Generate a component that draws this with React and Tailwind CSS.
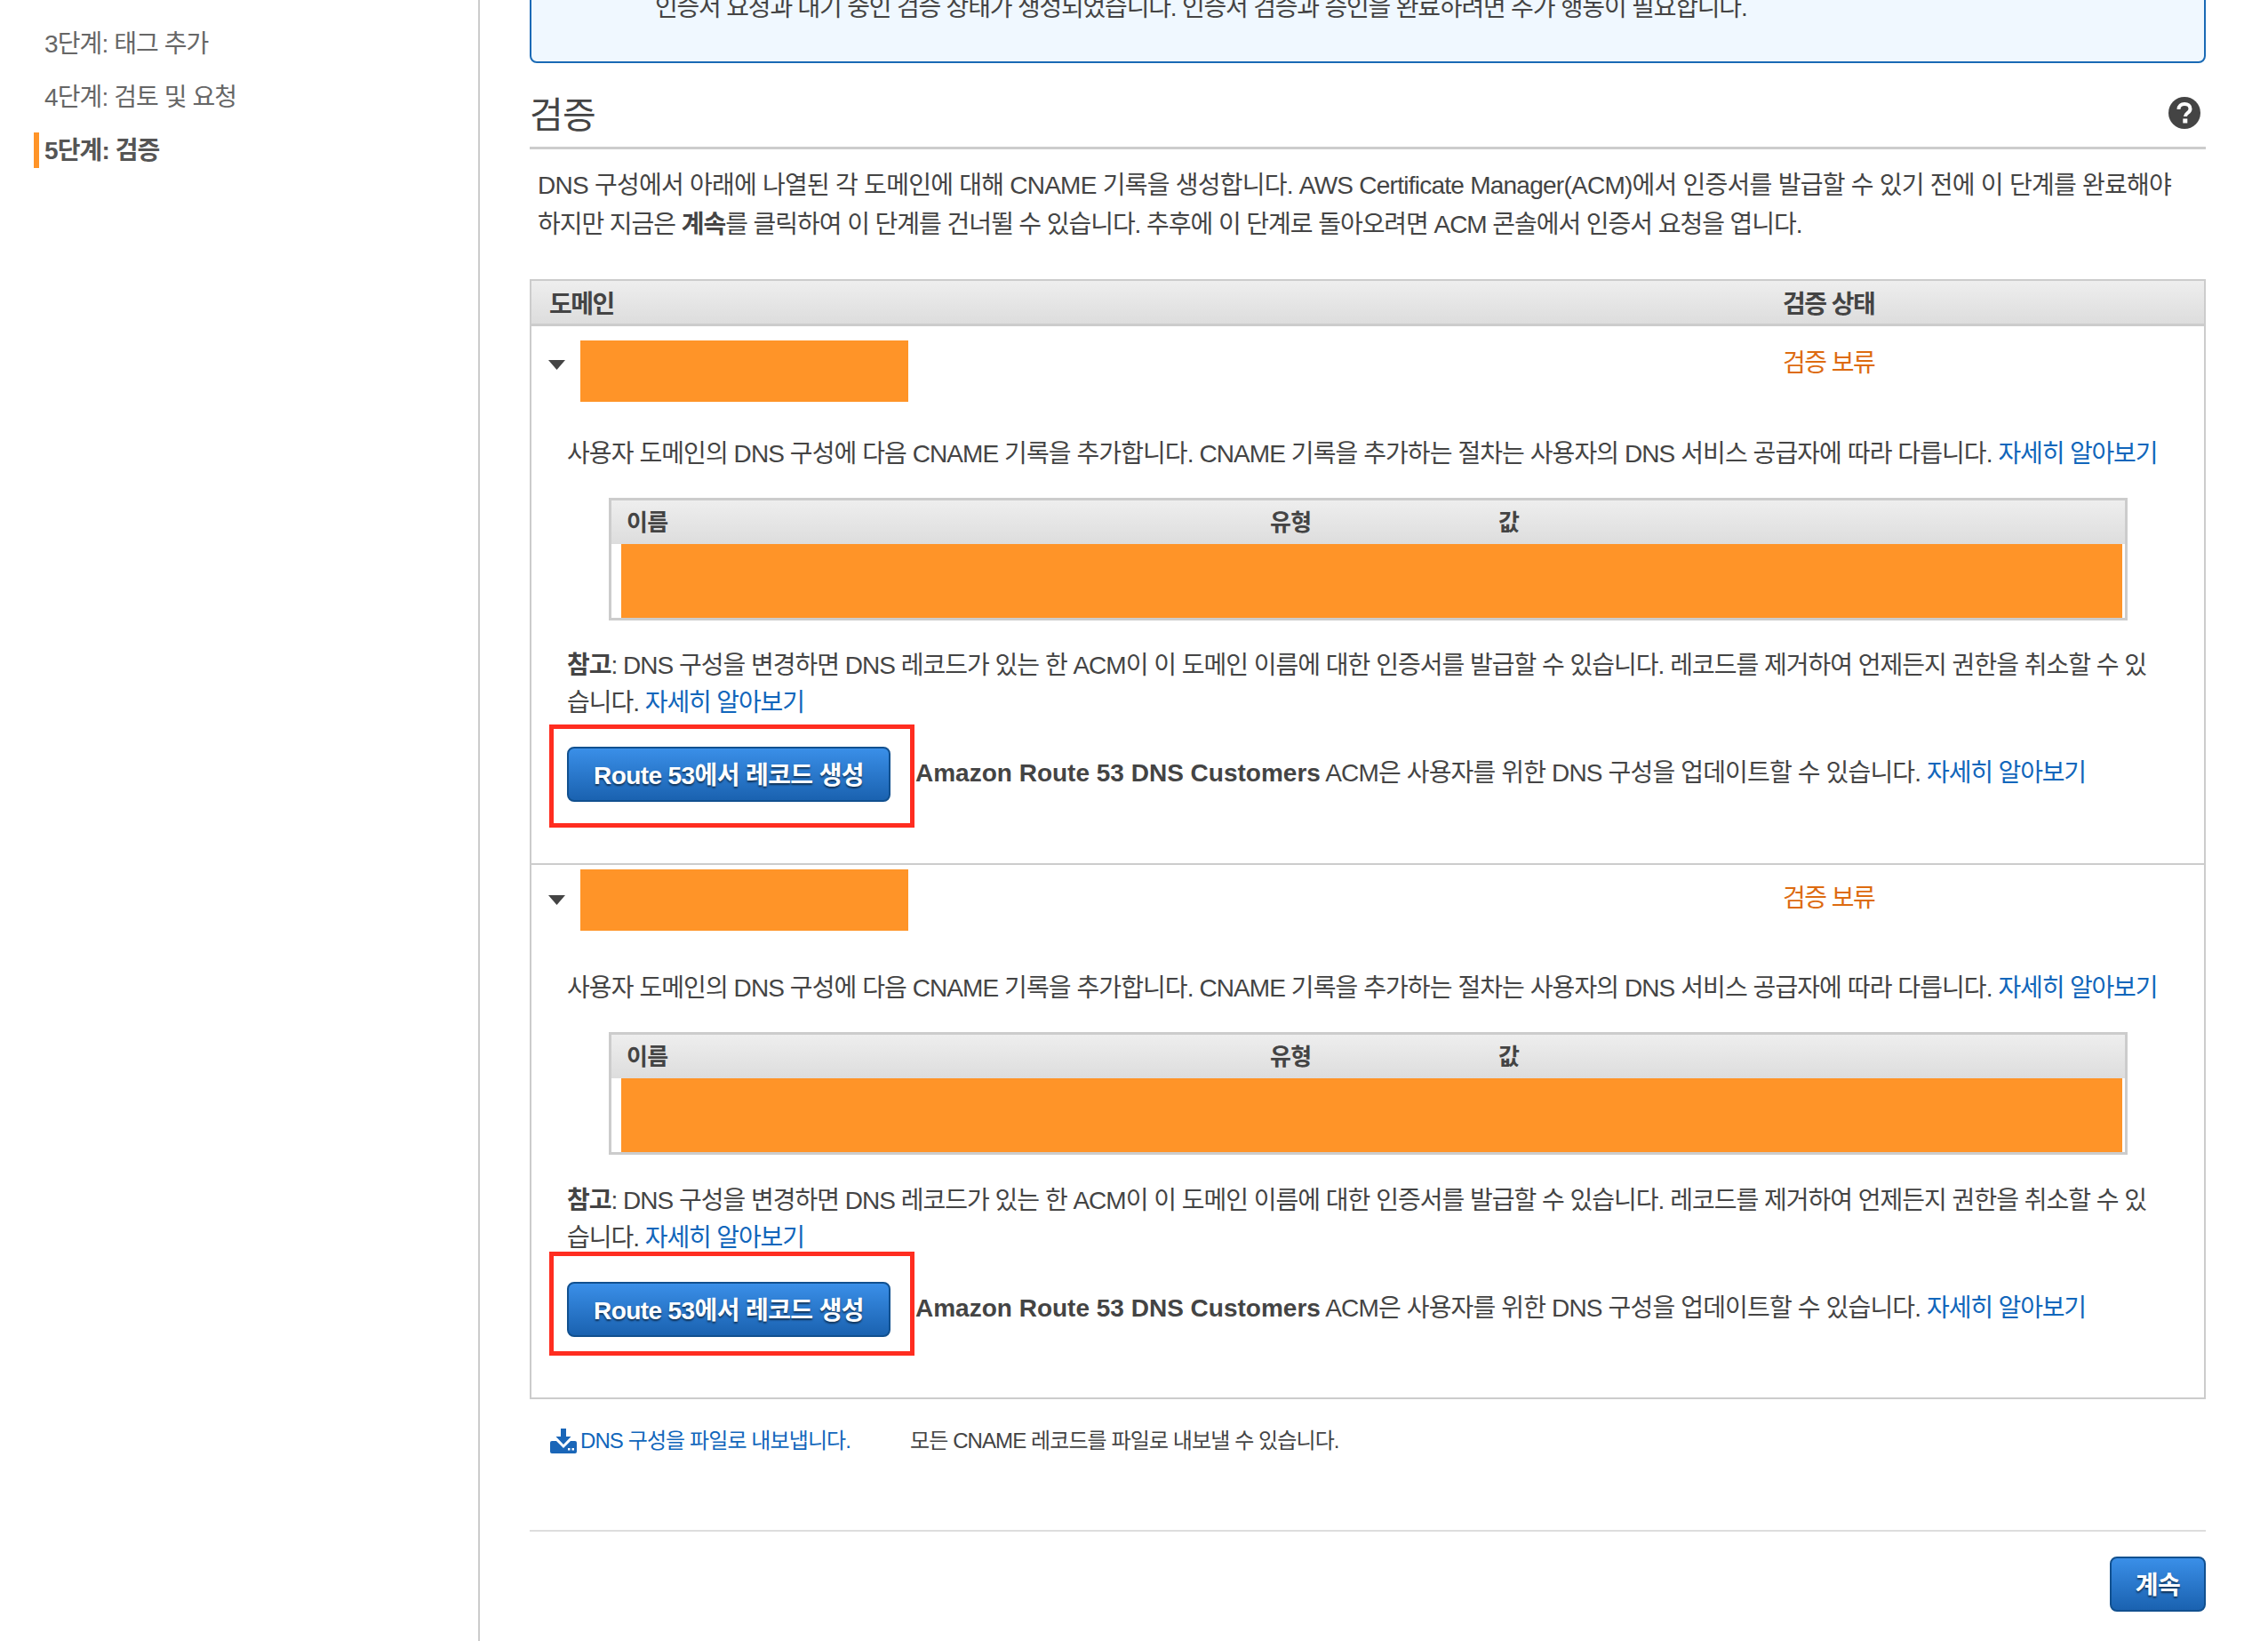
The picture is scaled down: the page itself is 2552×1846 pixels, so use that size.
import React from 'react';

const STEPS = [
  { label: '3단계: 태그 추가' },
  { label: '4단계: 검토 및 요청' },
  { label: '5단계: 검증', active: true },
];

const ROWS = [
  {
    head: 'h-[122px]',
    caret: 'mt-[38px]',
    box: 'mt-[16px]',
    status: 'mt-[20px]',
    note: 'mt-[30px]',
    red: 'mt-[3px] h-[116px] pt-[20px]',
    amazon: 'mt-[36px]',
    foot: 'pb-[40px] border-b-2 border-[#ccc]',
  },
  {
    head: 'h-[117px]',
    caret: 'mt-[34px]',
    box: 'mt-[5px]',
    status: 'mt-[16px]',
    note: 'mt-[31px]',
    red: '-mt-[6px] h-[117px] pt-[29px]',
    amazon: 'mt-[36px]',
    foot: 'pb-[47px]',
  },
];

function Link({ children }) {
  return <a className="tracking-[-1.15px] text-[#1166bb]">{children}</a>;
}

function BlueButton({ className, children }) {
  return (
    <button className={`h-[62px] rounded-lg border-2 border-[#11508f] bg-gradient-to-b from-[#3a8fe8] to-[#1a62b0] pt-[3px] text-[28px] leading-none font-bold text-white [text-shadow:0_2px_2px_rgba(0,0,0,0.55)] ${className}`}>
      {children}
    </button>
  );
}

function RecordTable() {
  return (
    <div className="mt-[27px] mr-[86px] ml-[87px] h-[138px] border-[3px] border-[#ccc]">
      <div className="flex h-[49px] items-center bg-gradient-to-b from-[#eeeeee] to-[#dddddd] pt-[2px] text-[26px] font-bold">
        <span className="ml-[17px] w-[724px]">이름</span>
        <span className="w-[257px]">유형</span>
        <span>값</span>
      </div>
      <div className="mr-[3px] ml-[11px] h-[83px] bg-[#ff9428]" />
    </div>
  );
}

function DomainRow({ row }) {
  return (
    <div className={row.foot}>
      <div className={`flex items-start ${row.head}`}>
        <svg className={`ml-[19px] h-[11px] w-[19px] shrink-0 ${row.caret}`} viewBox="0 0 19 11">
          <path d="M0 0h19L9.5 11z" fill="#444" />
        </svg>
        <div className={`ml-[17px] h-[69px] w-[369px] shrink-0 bg-[#ff9428] ${row.box}`} />
        <div className={`ml-[984px] leading-[44px] tracking-[-1.5px] text-[#dd6b10] ${row.status}`}>검증 보류</div>
      </div>
      <p className="ml-[40px] leading-[44px] tracking-[-0.92px]">
        사용자 도메인의 DNS 구성에 다음 CNAME 기록을 추가합니다. CNAME 기록을 추가하는 절차는 사용자의 DNS 서비스 공급자에 따라 다릅니다. <Link>자세히 알아보기</Link>
      </p>
      <RecordTable />
      <p className={`ml-[40px] leading-[42px] tracking-[-1px] whitespace-nowrap ${row.note}`}>
        <b>참고</b>: DNS 구성을 변경하면 DNS 레코드가 있는 한 ACM이 이 도메인 이름에 대한 인증서를 발급할 수 있습니다. 레코드를 제거하여 언제든지 권한을 취소할 수 있<br />습니다. <Link>자세히 알아보기</Link>
      </p>
      <div className="flex items-start">
        <div className={`ml-[20px] w-[411px] shrink-0 border-[5px] border-[#ff2d20] pl-[15px] ${row.red}`}>
          <BlueButton className="w-[364px]">Route 53에서 레코드 생성</BlueButton>
        </div>
        <p className={`ml-[1px] leading-[44px] tracking-[-0.85px] ${row.amazon}`}>
          <b className="tracking-[0px]">Amazon Route 53 DNS Customers</b> ACM은 사용자를 위한 DNS 구성을 업데이트할 수 있습니다. <Link>자세히 알아보기</Link>
        </p>
      </div>
    </div>
  );
}

export default function App() {
  return (
    <div className="flex h-[1846px] overflow-hidden bg-white text-[28px] tracking-[-0.6px] text-[#444] [font-family:'Liberation_Sans','Noto_Sans_CJK_KR',sans-serif]">
      {/* Sidebar */}
      <aside className="w-[540px] shrink-0 border-r-2 border-[#ccc] pt-[29px]">
        <ul className="flex flex-col gap-5">
          {STEPS.map(s => (
            <li
              key={s.label}
              className={`ml-[38px] h-10 border-l-[6px] pl-[6px] text-[28px] leading-[41px] tracking-[-0.9px] ${s.active ? 'border-[#ff9428] font-bold text-[#555]' : 'border-transparent text-[#666]'}`}
            >
              {s.label}
            </li>
          ))}
        </ul>
      </aside>

      {/* Main */}
      <main className="w-[1942px] shrink-0 pl-[56px]">
        <div className="-mt-[60px] h-[131px] rounded-b-lg border-2 border-[#1a6ab5] bg-[#f0f8ff] pt-[45px] pl-[139px] leading-[44px] tracking-[-1.2px]">
          인증서 요청과 대기 중인 검증 상태가 생성되었습니다. 인증서 검증과 승인을 완료하려면 추가 행동이 필요합니다.
        </div>

        <div className="flex h-[97px] items-center justify-between border-b-[3px] border-[#ccc] pt-[21px] pr-[6px]">
          <h2 className="mt-[3px] text-[41px] leading-none">검증</h2>
          <svg className="mb-[4px] h-9 w-9" viewBox="0 0 36 36">
            <circle cx="18" cy="18" r="18" fill="#444" />
            <path d="M11.500 14c0-3.800 2.800-6 6.600-6 3.700 0 6.400 2 6.400 5.400 0 4.600-5.500 4.600-5.500 8.600" fill="none" stroke="#fff" strokeWidth="4" />
            <rect x="16.300" y="24.500" width="5" height="5" fill="#fff" />
          </svg>
        </div>

        <p className="mt-[19px] ml-[9px] leading-[44px] tracking-[-0.75px] whitespace-nowrap">
          DNS 구성에서 아래에 나열된 각 도메인에 대해 CNAME 기록을 생성합니다. AWS Certificate Manager(ACM)에서 인증서를 발급할 수 있기 전에 이 단계를 완료해야<br />
          <span className="tracking-[-1.05px]">하지만 지금은 <b>계속</b>를 클릭하여 이 단계를 건너뛸 수 있습니다. 추후에 이 단계로 돌아오려면 ACM 콘솔에서 인증서 요청을 엽니다.</span>
        </p>

        {/* Domain table */}
        <div className="mt-[39px] border-2 border-[#ccc]">
          <div className="flex h-[51px] items-center border-b-[3px] border-[#ccc] bg-gradient-to-b from-[#eeeeee] to-[#dddddd] pt-[5px] font-bold tracking-[-1.5px]">
            <span className="ml-[20px] w-[1388px]">도메인</span>
            <span>검증 상태</span>
          </div>
          {ROWS.map((row, i) => <DomainRow key={i} row={row} />)}
        </div>

        {/* Export */}
        <div className="mt-[25px] ml-[23px] flex h-[44px] items-center text-[24px] tracking-[-0.9px]">
          <svg className="h-[28px] w-[30px] shrink-0" viewBox="0 0 30 28">
            <path d="M12 0h6v9h5.500L15 18 6.500 9H12z" fill="#1a66b8" />
            <path d="M2 14h5l8 8 8-8h5a2 2 0 0 1 2 2v10a2 2 0 0 1-2 2H2a2 2 0 0 1-2-2V16a2 2 0 0 1 2-2z" fill="#1a66b8" />
            <rect x="20" y="22" width="2.500" height="2.500" fill="#fff" />
            <rect x="24.500" y="22" width="2.500" height="2.500" fill="#fff" />
          </svg>
          <span className="ml-[4px] w-[371px] text-[#1166bb]">DNS 구성을 파일로 내보냅니다.</span>
          <span>모든 CNAME 레코드를 파일로 내보낼 수 있습니다.</span>
        </div>

        <div className="mt-[78px] border-t-2 border-[#ddd]" />
        <div className="mt-[28px] flex justify-end">
          <BlueButton className="w-[108px]">계속</BlueButton>
        </div>
      </main>
    </div>
  );
}
